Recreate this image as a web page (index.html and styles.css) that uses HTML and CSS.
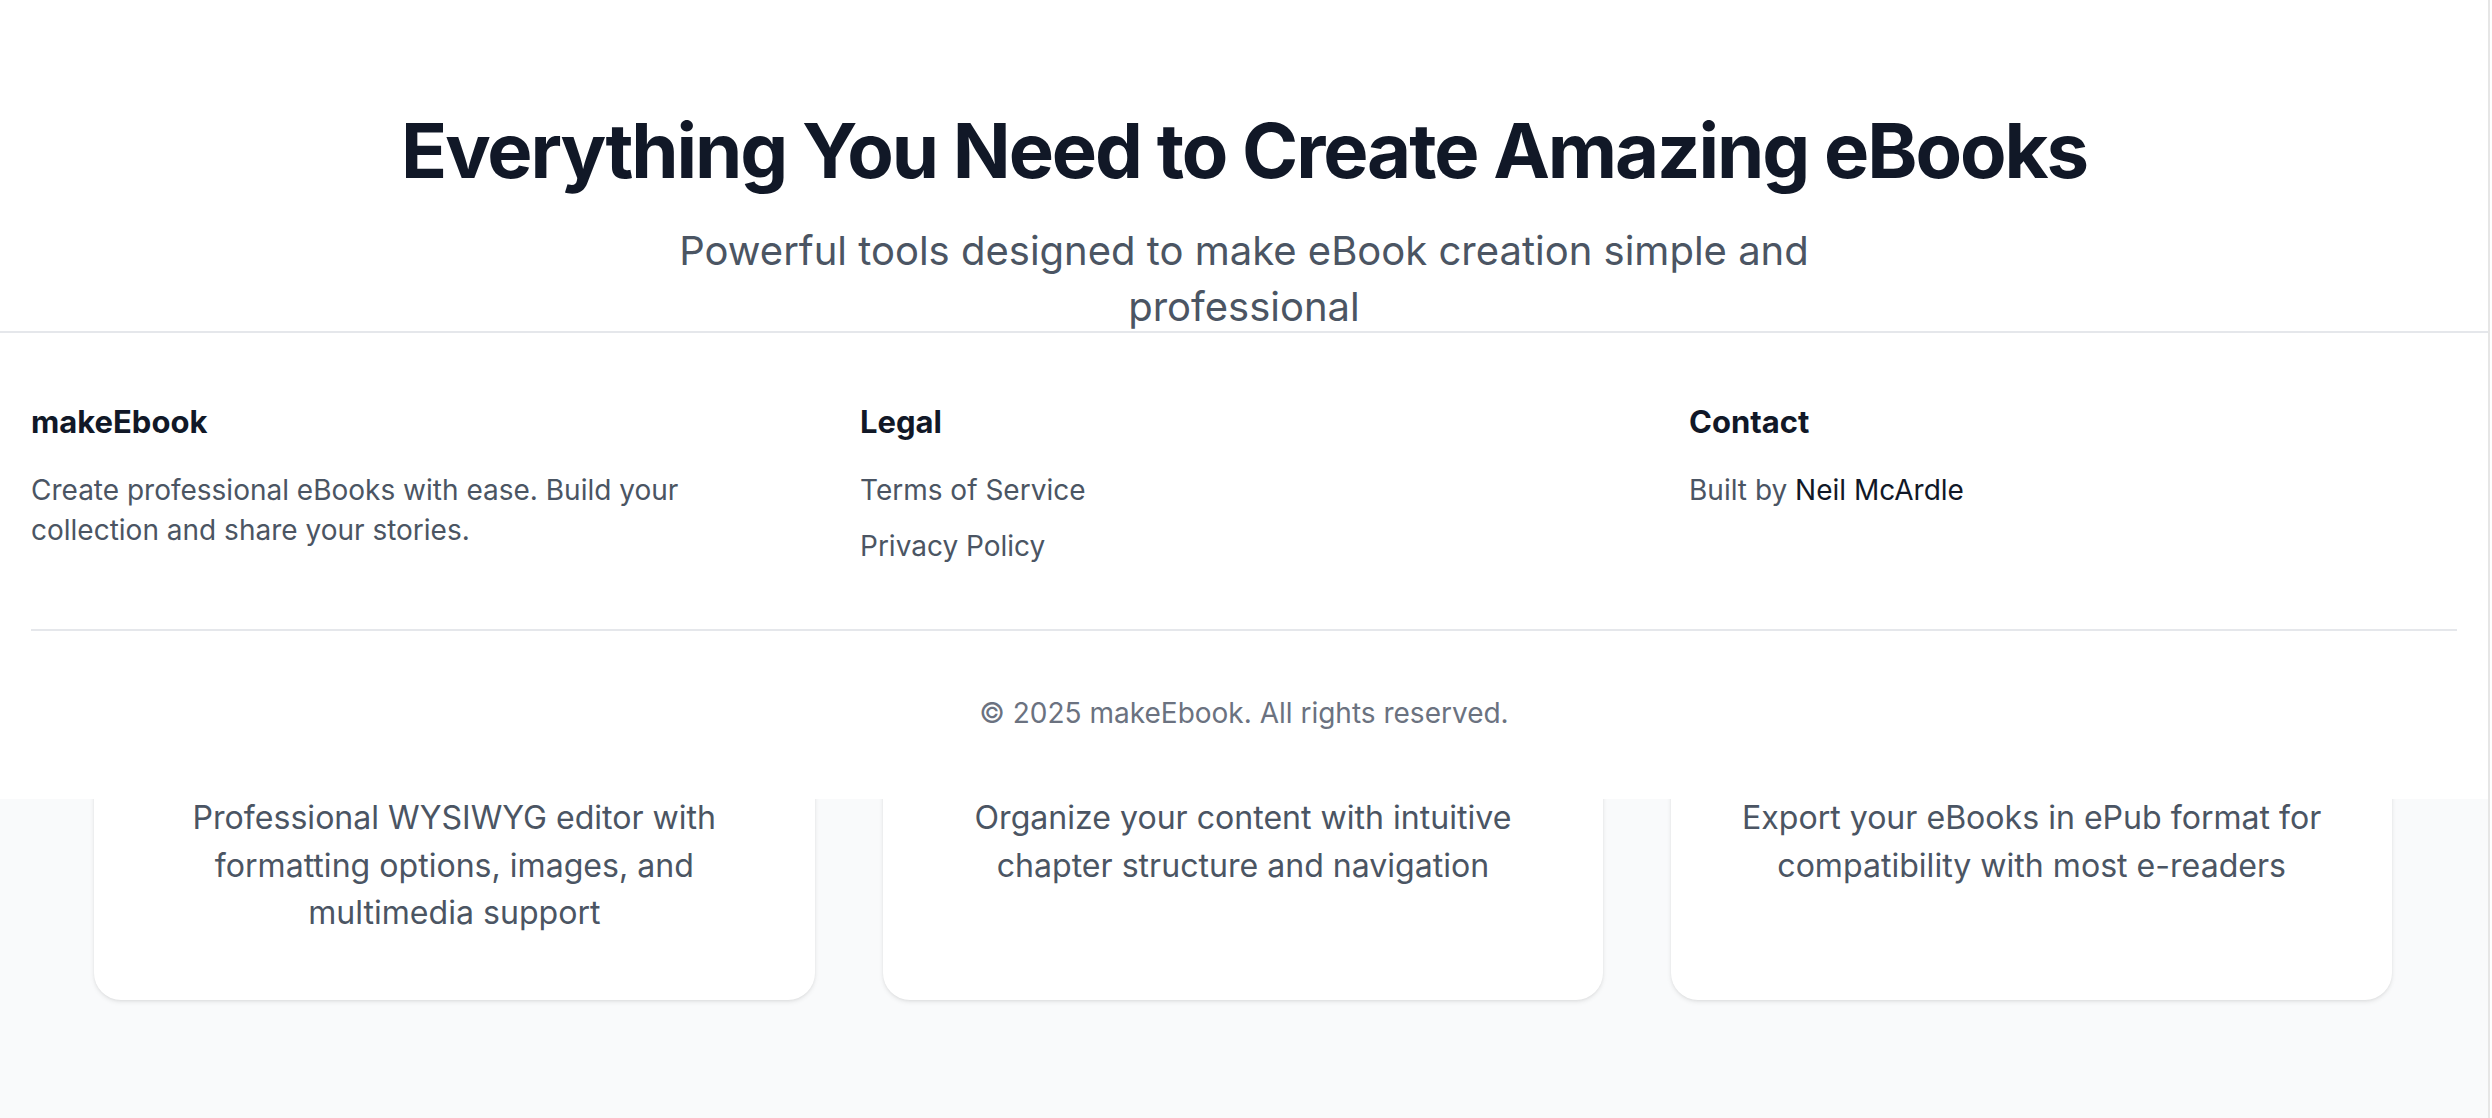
FILE: index.html
```html
<!DOCTYPE html>
<html lang="en">
<head>
<meta charset="utf-8">
<title>makeEbook</title>
<link rel="stylesheet" href="styles.css">
</head>
<body>
<div class="page">
  <section class="hero">
    <h1 class="hero-title">Everything You Need to Create Amazing eBooks</h1>
    <p class="hero-sub">Powerful tools designed to make eBook creation simple and professional</p>
  </section>

  <section class="features">
    <div class="feature-grid">
      <div class="card">
        <p class="card-text">Professional WYSIWYG editor with formatting options, images, and multimedia support</p>
      </div>
      <div class="card">
        <p class="card-text">Organize your content with intuitive chapter structure and navigation</p>
      </div>
      <div class="card">
        <p class="card-text">Export your eBooks in ePub format for compatibility with most e-readers</p>
      </div>
    </div>
  </section>

  <footer class="footer">
    <div class="footer-grid">
      <div class="footer-col">
        <h3 class="footer-title">makeEbook</h3>
        <p class="footer-text">Create professional eBooks with ease. Build your collection and share your stories.</p>
      </div>
      <div class="footer-col">
        <h3 class="footer-title">Legal</h3>
        <ul class="footer-links">
          <li><a class="footer-link" href="#">Terms of Service</a></li>
          <li><a class="footer-link" href="#">Privacy Policy</a></li>
        </ul>
      </div>
      <div class="footer-col">
        <h3 class="footer-title">Contact</h3>
        <p class="footer-text">Built by <a class="footer-author" href="#">Neil McArdle</a></p>
      </div>
    </div>
    <div class="footer-bottom">
      <p class="copyright">© 2025 makeEbook. All rights reserved.</p>
    </div>
  </footer>
</div>
</body>
</html>
```

FILE: styles.css
```css
* { box-sizing: border-box; }

html, body {
  margin: 0;
  padding: 0;
  background: #ffffff;
}

body {
  font-family: Inter, "Noto Sans", "Liberation Sans", sans-serif;
  color: #111827;
  width: 2492px;
  height: 1118px;
  overflow: hidden;
}

.page {
  position: relative;
  width: 2490px;
  min-height: 1118px;
  background: #f9fafb;
  border-right: 2px solid #e6e6e6;
}

.hero {
  background: #ffffff;
  padding: 112px 0 80px;
  text-align: center;
}

.hero-title {
  margin: 0 0 35px;
  font-size: 76px;
  line-height: 76px;
  font-weight: 700;
  color: #111827;
  letter-spacing: -2.1px;
}

.hero-sub {
  margin: 0 auto;
  max-width: 1200px;
  font-size: 40px;
  line-height: 56px;
  color: #4b5563;
}

.features {
  padding: 53px 2px 80px 0;
}

.feature-grid {
  max-width: 2298px;
  margin: 0 auto;
  display: grid;
  grid-template-columns: repeat(3, 1fr);
  gap: 68px;
}

.card {
  background: #ffffff;
  border-radius: 27px;
  box-shadow: 0 2px 5px rgba(0, 0, 0, 0.08), 0 1px 3px rgba(0, 0, 0, 0.05);
  padding: 326px 53px 63px;
  text-align: center;
}

.card-text {
  margin: 0;
  font-size: 32.1px;
  line-height: 47.5px;
  color: #4b5563;
}

.footer {
  position: absolute;
  top: 331px;
  left: 0;
  width: 2488px;
  height: 468px;
  background: #ffffff;
  border-top: 2px solid #e5e7eb;
  padding: 66px 31px 0;
}

.footer-grid {
  display: grid;
  grid-template-columns: repeat(3, 1fr);
  gap: 61px;
}

.footer-title {
  margin: 0 0 24px;
  font-size: 31px;
  line-height: 46.7px;
  font-weight: 700;
  color: #111827;
}

.footer-text {
  margin: 0;
  max-width: 720px;
  font-size: 28px;
  line-height: 40px;
  color: #4b5563;
}

.footer-links {
  list-style: none;
  margin: 0;
  padding: 0;
  display: flex;
  flex-direction: column;
  gap: 16px;
}

.footer-link {
  font-size: 28px;
  line-height: 40px;
  color: #4b5563;
  text-decoration: none;
}

.footer-author {
  color: #111827;
  text-decoration: none;
}

.footer-bottom {
  margin-top: 63px;
  border-top: 2px solid #e5e7eb;
  padding-top: 62px;
}

.copyright {
  margin: 0;
  text-align: center;
  font-size: 28px;
  line-height: 40px;
  color: #6b7280;
}
```
